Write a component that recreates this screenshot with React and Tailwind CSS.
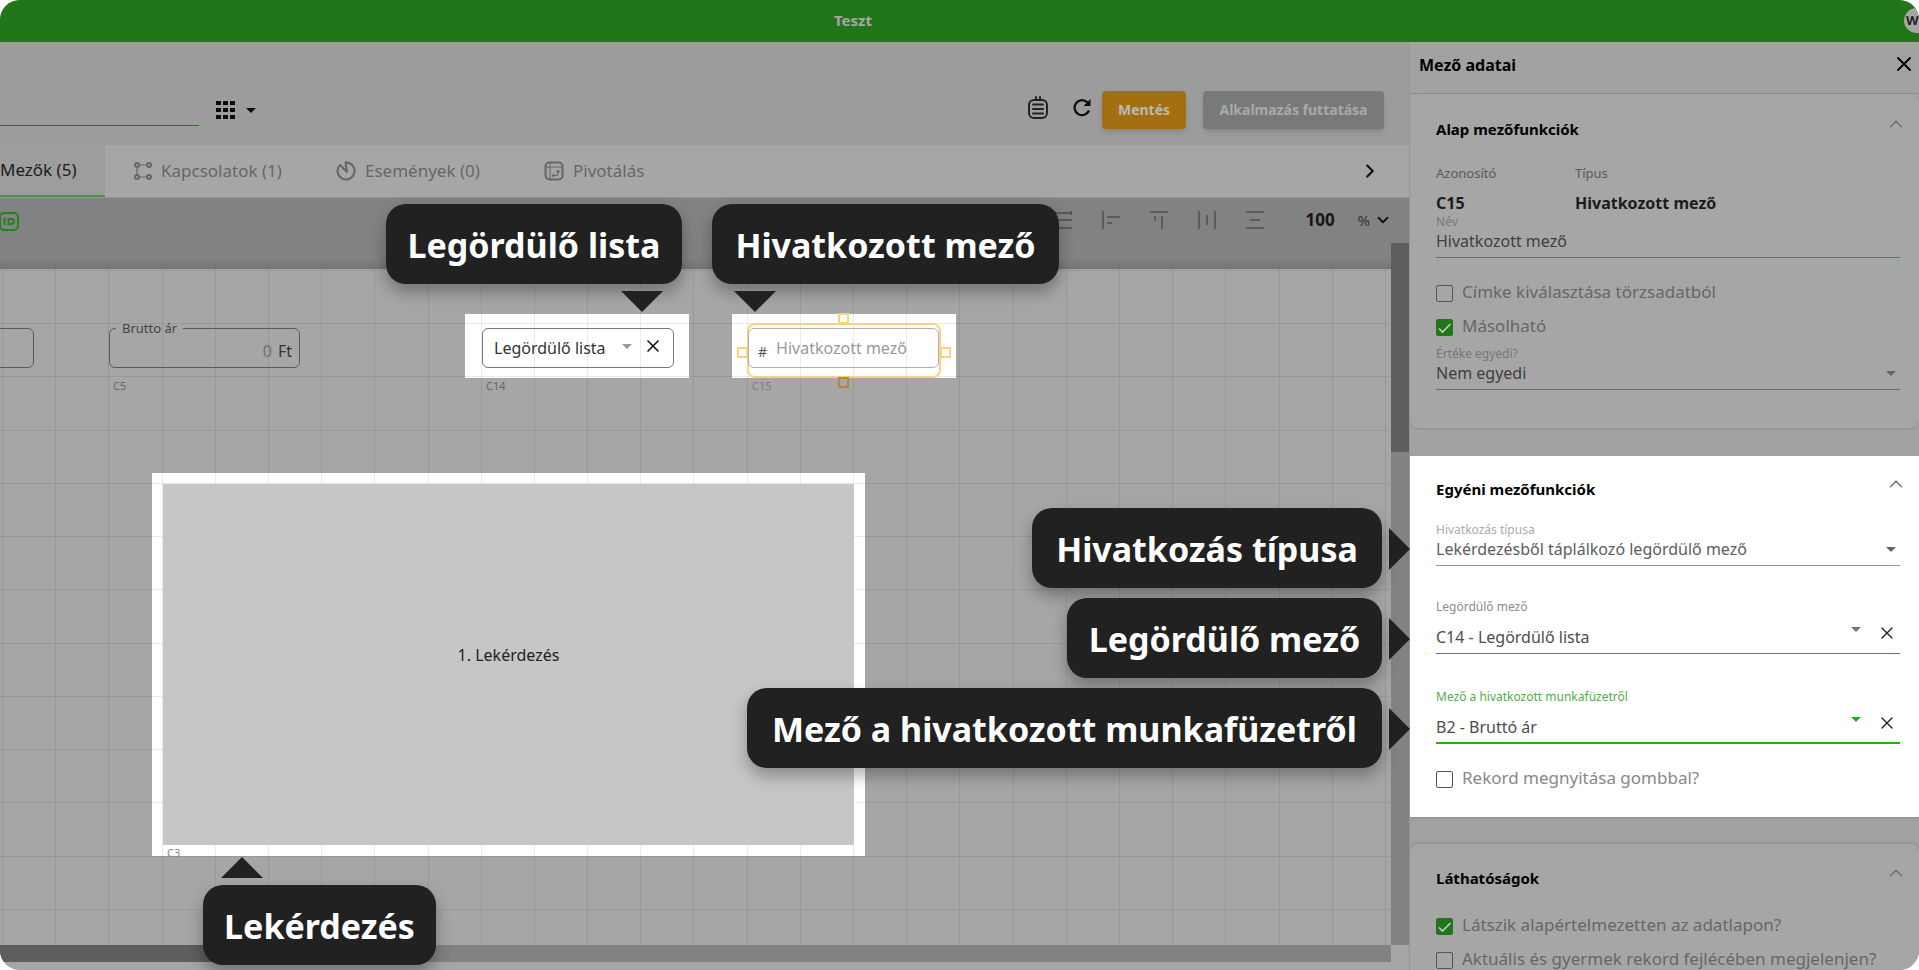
import { useId } from 'react';
import { ChevronDown, ChevronRight, ChevronUp, X } from 'lucide-react';
import { clsx } from 'clsx';

const tabs = [
    { label: 'Kapcsolatok (1)', icon: RelationIcon, width: 'w-[202px]' },
    { label: 'Események (0)', icon: EventIcon, width: 'w-[208px]' },
    { label: 'Pivotálás', icon: PivotIcon, width: 'w-[202px]' },
];

const alignIcons = [
    { label: 'Azonos szélesség', path: 'M0 2H18M0 9H18M0 17H18M1 0V4M17 0V4' },
    { label: 'Balra igazítás', path: 'M1 0V18M5 6H18M5 12H10' },
    { label: 'Felülre igazítás', path: 'M0 1H18M5 5V10M12 5V18' },
    { label: 'Vízszintes elosztás', path: 'M1 0V18M9 4V14M17 0V18' },
    { label: 'Függőleges elosztás', path: 'M0 1H18M4 9H14M0 17H18' },
];

function RelationIcon() {
    return (
        <svg viewBox="0 0 18 20" className="h-5 w-[18px]" fill="none" stroke="currentColor" strokeWidth="2">
            <circle cx="3" cy="4" r="2" />
            <circle cx="15" cy="4" r="2" />
            <circle cx="3" cy="16" r="2" />
            <circle cx="15" cy="16" r="2" />
            <path d="M5 4H13M3 6V14M5 16H13" strokeWidth="1.2" />
        </svg>
    );
}

function EventIcon() {
    return (
        <svg viewBox="0 0 20 20" className="size-5" fill="none" stroke="currentColor" strokeWidth="2" strokeLinejoin="round">
            <path d="M9.5 1.5A8.5 8.5 0 1 1 4 4L11 11Z" />
        </svg>
    );
}

function PivotIcon() {
    return (
        <svg viewBox="0 0 20 20" className="size-5" fill="none" stroke="currentColor">
            <rect x="1.5" y="1.5" width="17" height="17" rx="4" strokeWidth="2" />
            <path d="M2 6H18M6 2V18" strokeWidth="1" />
            <path d="M9 14.5H12.5Q14 14.5 14 13V9.5M10 13L8.5 14.5L10 16M12.5 11L14 9.5L15.5 11" strokeWidth="1.2" />
        </svg>
    );
}

function Caret({ className }) {
    return (
        <svg viewBox="0 0 10 5" className={clsx('pointer-events-none h-[5px] w-[10px] shrink-0', className)} fill="currentColor">
            <path d="M0 0H10L5 5Z" />
        </svg>
    );
}

function Checkbox({ label, checked, className }) {
    return (
        <label className={clsx('flex h-[17px] items-start gap-[9px] text-[17px] leading-[13px] whitespace-nowrap', className)}>
            <span className="relative size-[17px] shrink-0">
                <input
                    type="checkbox"
                    defaultChecked={checked}
                    className="peer block size-[17px] appearance-none rounded-[2px] border border-[#555] checked:border-[#21761a] checked:bg-[#21761a]"
                />
                <svg
                    viewBox="0 0 17 17"
                    className="pointer-events-none absolute inset-0 hidden size-[17px] text-[#c8c8c8] peer-checked:block"
                    fill="none"
                    stroke="currentColor"
                    strokeWidth="1.6"
                >
                    <path d="M3 9.5L6.5 13L14.5 5" />
                </svg>
            </span>
            {label}
        </label>
    );
}

function SelectField({ label, value, clearable, active, labelClass, lineClass, textClass, className }) {
    const id = useId();

    return (
        <div className={className}>
            <label htmlFor={id} className={clsx('block text-xs leading-[14px]', labelClass)}>
                {label}
            </label>
            <div
                className={clsx(
                    'flex items-start',
                    clearable && 'mt-[11px]',
                    active ? 'border-b-2 pb-[3px]' : 'border-b pb-1',
                    lineClass,
                )}
            >
                <select
                    id={id}
                    className={clsx('h-6 min-w-0 flex-1 appearance-none bg-transparent text-base leading-6 outline-none', textClass)}
                >
                    <option>{value}</option>
                </select>
                {clearable ? (
                    <>
                        <Caret className={clsx('mt-[2px]', active ? 'text-[#20b014]' : 'text-[#757575]')} />
                        <button type="button" aria-label="Törlés" className="-mt-[2px] mr-[3px] ml-4 text-[#222]">
                            <X size={20} strokeWidth={1.6} />
                        </button>
                    </>
                ) : (
                    <Caret className="mt-[10px] mr-1 text-[#666]" />
                )}
            </div>
        </div>
    );
}

function Section({ title, className, children }) {
    return (
        <section className={clsx('pr-[19px] pl-[26px]', className)}>
            <div className="flex items-start justify-between">
                <h2 className="text-[15px] leading-6 font-bold text-black">{title}</h2>
                <button type="button" aria-label={title} className="-mt-1 -mr-[7px] text-[#707070]">
                    <ChevronUp size={22} strokeWidth={1.5} />
                </button>
            </div>
            {children}
        </section>
    );
}

function Callout({ children, className, arrow }) {
    return (
        <div
            className={clsx(
                'absolute z-10 flex h-20 items-center justify-center rounded-[20px] bg-[#212121] pt-[2px] text-[34px] leading-10 font-bold whitespace-nowrap text-white shadow-[0_8px_16px_rgba(0,0,0,0.3)]',
                className,
            )}
        >
            {children}
            <span className={clsx('absolute bg-[#212121]', arrow)} />
        </div>
    );
}

const arrowDown = 'top-[87px] h-[21px] w-[42px] [clip-path:polygon(0_0,100%_0,50%_100%)]';
const arrowUp = '-top-7 left-[18px] h-[21px] w-[42px] [clip-path:polygon(0_100%,100%_100%,50%_0)]';
const arrowRight = '-right-7 top-5 h-[42px] w-[21px] [clip-path:polygon(0_0,100%_50%,0_100%)]';

function GridLines() {
    return (
        <div className="pointer-events-none absolute top-[1px] left-[2px] h-[692px] w-[1384px]">
            <div className="absolute inset-0 flex">
                {Array.from({ length: 26 }, (_, i) => (
                    <div key={i} className="-mt-1 flex-1 border-l border-black/8" />
                ))}
                <div className="border-l border-black/8" />
            </div>
            <div className="absolute inset-y-0 -right-1 -left-1 flex flex-col">
                {Array.from({ length: 13 }, (_, i) => (
                    <div key={i} className="flex-1 border-t border-black/8" />
                ))}
            </div>
        </div>
    );
}

function Canvas() {
    return (
        <div className="relative flex-1 overflow-hidden bg-[#a6a6a6] text-[#333]">
            <div className="absolute top-[45px] left-[465px] h-16 w-[224px] bg-white" />
            <div className="absolute top-[45px] left-[732px] h-16 w-[224px] bg-white" />
            <div className="absolute top-[204px] left-[152px] h-[383px] w-[713px] bg-white" />
            <GridLines />

            <div className="absolute top-[59px] -left-4 h-10 w-[50px] rounded-md border border-[#5a5a5a]" />

            <div className="absolute top-[59px] left-[109px] h-10 w-[191px]">
                <fieldset className="absolute inset-x-0 -top-2 bottom-0 rounded-md border border-[#5a5a5a] px-[6px]">
                    <legend className="px-[6px] text-[13px] leading-4 text-[#444]">Brutto ár</legend>
                </fieldset>
                <label className="absolute inset-0 flex items-center gap-[6px] pt-[5px] pr-2 pl-3 text-base leading-6 text-[#333]">
                    <input aria-label="Brutto ár" defaultValue="0" className="min-w-0 flex-1 bg-transparent text-right text-[#707070] outline-none" />
                    Ft
                </label>
            </div>
            <span className="absolute top-[109px] left-[113px] text-[11px] leading-4 text-[#666]">C5</span>

            <div className="absolute top-[59px] left-[482px] flex h-10 w-[192px] items-center rounded-md border border-[#777] pr-[10px] pl-[11px]">
                <select aria-label="Legördülő lista" className="min-w-0 flex-1 appearance-none bg-transparent text-base leading-6 text-[#333] outline-none">
                    <option>Legördülő lista</option>
                </select>
                <Caret className="-mt-1 text-[#999]" />
                <button type="button" aria-label="Törlés" className="-mt-1 ml-[11px] text-[#1a1a1a]">
                    <X size={20} strokeWidth={2} />
                </button>
            </div>
            <span className="absolute top-[109px] left-[486px] text-[11px] leading-4 text-[#666]">C14</span>

            <div className="absolute top-[54px] left-[747px] h-[55px] w-[194px] rounded-lg border-2 border-[#fdd081]">
                <span className="absolute -top-3 left-[89px] size-[11px] border-2 border-[#fdd081]" />
                <span className="absolute top-[22px] -left-3 size-[11px] border-2 border-[#fdd081]" />
                <span className="absolute top-[22px] -right-3 size-[11px] border-2 border-[#fdd081]" />
                <span className="absolute -bottom-3 left-[89px] size-[11px] border-2 border-[#b58842]" />
            </div>
            <label className="absolute top-[59px] left-[748px] flex h-10 w-[191px] items-center gap-[9px] rounded-md border border-[#b0b0b0] pl-[9px] text-base leading-6">
                <span className="pt-2 text-sm leading-4 text-[#555]">#</span>
                <input placeholder="Hivatkozott mező" className="min-w-0 flex-1 bg-transparent outline-none placeholder:text-[#999]" />
            </label>
            <span className="absolute top-[109px] left-[752px] text-[11px] leading-4 text-[#7c7c7c]">C15</span>

            <div className="absolute top-[215px] left-[163px] flex h-[361px] w-[691px] items-center justify-center bg-[#c6c6c6] pb-5 text-base text-[#222]">
                1. Lekérdezés
            </div>
            <span className="absolute top-[576px] left-[167px] text-[11px] leading-4 text-[#888]">C3</span>
        </div>
    );
}

function FieldPanel() {
    return (
        <aside className="w-[510px] shrink-0 overflow-hidden border-l border-[#959595] bg-[#a2a2a2]">
            <div className="flex h-[52px] items-start justify-between border-b border-[#8c8c8c] pt-[11px] pr-[3px] pl-[9px]">
                <h1 className="text-base leading-6 font-bold text-black">Mező adatai</h1>
                <button type="button" aria-label="Bezárás" className="-mt-[1px] text-black">
                    <X size={24} strokeWidth={1.8} />
                </button>
            </div>

            <Section title="Alap mezőfunkciók" className="rounded-lg bg-[#a6a6a6] pt-[23px] pb-[38px] shadow-sm">
                <dl className="mt-6 grid grid-cols-[139px_1fr] text-[#1c1c1c]">
                    <dt className="text-[13px] leading-4 text-[#5a5a5a]">Azonosító</dt>
                    <dt className="text-[13px] leading-4 text-[#5a5a5a]">Típus</dt>
                    <dd className="mt-[10px] text-base leading-6 font-bold">C15</dd>
                    <dd className="mt-[10px] text-base leading-6 font-bold">Hivatkozott mező</dd>
                </dl>
                <label className="block text-xs leading-[14px] text-[#777]">
                    Név
                    <input
                        defaultValue="Hivatkozott mező"
                        className="block h-[29px] w-full border-b border-[#3d8f36] bg-transparent pb-1 text-base leading-6 text-[#3f3f3f] outline-none"
                    />
                </label>
                <Checkbox label="Címke kiválasztása törzsadatból" className="mt-[27px] text-[#666]" />
                <Checkbox label="Másolható" checked className="mt-[17px] text-[#666]" />
                <SelectField
                    label="Értéke egyedi?"
                    value="Nem egyedi"
                    className="mt-[11px]"
                    labelClass="text-[#777]"
                    lineClass="border-[#3d8f36]"
                    textClass="text-[#3f3f3f]"
                />
            </Section>

            <Section title="Egyéni mezőfunkciók" className="mt-7 bg-white pt-[21px] pb-[29px] shadow-sm">
                <SelectField
                    label="Hivatkozás típusa"
                    value="Lekérdezésből táplálkozó legördülő mező"
                    className="mt-[22px]"
                    labelClass="text-[#aaa]"
                    lineClass="border-[#5cc554]"
                    textClass="text-[#5c5c5c]"
                />
                <SelectField
                    label="Legördülő mező"
                    value="C14 - Legördülő lista"
                    clearable
                    className="mt-[34px]"
                    labelClass="text-[#8c8c8c]"
                    lineClass="border-[#20b014]"
                    textClass="text-[#4c4c4c]"
                />
                <SelectField
                    label="Mező a hivatkozott munkafüzetről"
                    value="B2 - Bruttó ár"
                    clearable
                    active
                    className="mt-9"
                    labelClass="text-[#4fae48]"
                    lineClass="border-[#20b014]"
                    textClass="text-[#4c4c4c]"
                />
                <Checkbox label="Rekord megnyitása gombbal?" className="mt-[27px] text-[#888]" />
            </Section>

            <Section title="Láthatóságok" className="mt-[27px] rounded-t-lg bg-[#a6a6a6] pt-[22px] pb-10 shadow-[0_0_4px_rgba(0,0,0,0.2)]">
                <Checkbox label="Látszik alapértelmezetten az adatlapon?" checked className="mt-7 text-[#666]" />
                <Checkbox label="Aktuális és gyermek rekord fejlécében megjelenjen?" className="mt-[17px] text-[#666]" />
            </Section>
        </aside>
    );
}

export default function App() {
    return (
        <div className="flex h-screen flex-col overflow-hidden rounded-[20px] bg-[#a6a6a6] font-['Noto_Sans',sans-serif]">
            <header className="relative flex h-[42px] shrink-0 items-center justify-center bg-[#21761a] pr-[213px] pb-[2px]">
                <span className="text-[15px] leading-5 font-bold text-[#a6a6a6]">Teszt</span>
                <span className="absolute top-2 -right-[10px] flex size-[25px] items-center rounded-full bg-[#a6a6a6] pl-[2px] text-[13px] font-bold text-[#222]">
                    W
                </span>
            </header>

            <div className="flex min-h-0 flex-1">
                <main className="relative flex min-w-0 flex-1 flex-col">
                    <div className="flex h-[103px] shrink-0 items-start bg-[#9c9c9c] pt-[49px] pr-[25px]">
                        <input aria-label="Munkafüzet neve" className="h-[35px] w-[199px] border-b border-[#21761a] bg-transparent outline-none" />
                        <button type="button" aria-label="Nézet" className="mt-[10px] ml-[17px] flex items-center gap-[11px] text-[#0c0c0c]">
                            <svg viewBox="0 0 19 18" className="h-[18px] w-[19px]" fill="currentColor">
                                <path d="M0 0h5v4H0zM7 0h5v4H7zM14 0h5v4h-5zM0 7h5v4H0zM7 7h5v4H7zM14 7h5v4h-5zM0 14h5v4H0zM7 14h5v4H7zM14 14h5v4h-5z" />
                            </svg>
                            <Caret />
                        </button>
                        <div className="ml-auto flex items-start">
                            <button type="button" aria-label="Napló" className="mt-[5px] text-[#222]">
                                <svg viewBox="0 0 20 24" className="h-6 w-5" fill="none" stroke="currentColor" strokeWidth="2" strokeLinecap="round">
                                    <rect x="1" y="4" width="18" height="18" rx="5" />
                                    <path d="M5 8.5H15M5 13H15M5 17.5H15M8 1V4M12 1V4" strokeWidth="2" />
                                </svg>
                            </button>
                            <button type="button" aria-label="Frissítés" className="mt-[7px] mr-[10px] ml-6 text-[#0c0c0c]">
                                <svg viewBox="0 0 20 20" className="size-5" fill="none" stroke="currentColor" strokeWidth="2.2">
                                    <path d="M17 12.5A7.5 7.5 0 1 1 15.5 4.5" />
                                    <path d="M18.5 1V8H11.5Z" fill="currentColor" stroke="none" />
                                </svg>
                            </button>
                            <button type="button" className="h-[38px] w-[84px] rounded bg-[#a46f10] text-sm font-bold text-[#b9b9b9] shadow-md">
                                Mentés
                            </button>
                            <button
                                type="button"
                                className="ml-[17px] h-[38px] w-[181px] rounded bg-[#777a78] text-sm font-bold whitespace-nowrap text-[#a9a9a9] shadow-md"
                            >
                                Alkalmazás futtatása
                            </button>
                        </div>
                    </div>

                    <nav className="flex h-[52px] shrink-0 items-stretch bg-[#a6a6a6] pr-7 text-[17px] leading-6 text-[#666]">
                        <button type="button" className="w-[105px] border-b-2 border-[#4f9049] bg-[#9d9d9d] text-left whitespace-nowrap text-[#1c1c1c]">
                            Mezők (5)
                        </button>
                        {tabs.map(({ label, icon: Icon, width }) => (
                            <button key={label} type="button" className={clsx('flex items-center gap-[9px] pl-[29px] whitespace-nowrap', width)}>
                                <Icon />
                                {label}
                            </button>
                        ))}
                        <button type="button" aria-label="Következő fülek" className="ml-auto text-[#111]">
                            <ChevronRight size={22} strokeWidth={2.4} />
                        </button>
                    </nav>

                    <div className="flex h-[46px] shrink-0 items-start border-t border-[#949494] bg-[#828282] pt-3 pr-[17px]">
                        <button type="button" aria-label="Azonosítók" className="mt-[2px] text-[#21831a]">
                            <svg viewBox="0 0 20 20" className="size-5" fill="none" stroke="currentColor" strokeWidth="2">
                                <rect x="0" y="1" width="18" height="17" rx="4" />
                                <path d="M4.5 6V13M8.5 7H11Q14 7 14 9.5Q14 12 11 12H8.5Z" />
                            </svg>
                        </button>
                        <div className="ml-auto flex items-start gap-[30px]">
                            {alignIcons.map((icon) => (
                                <button key={icon.label} type="button" aria-label={icon.label} className="mt-[1px] text-[#4f4f4f]">
                                    <svg viewBox="0 0 18 18" className="size-[18px]" fill="none" stroke="currentColor" strokeWidth="1.5">
                                        <path d={icon.path} />
                                    </svg>
                                </button>
                            ))}
                        </div>
                        <input aria-label="Nagyítás" defaultValue="100" className="ml-[42px] h-5 w-[52px] bg-transparent text-[17px] leading-5 font-bold text-[#161616] outline-none" />
                        <button type="button" className="flex h-5 items-center gap-1 text-[15px] text-[#333]">
                            %
                            <ChevronDown size={18} strokeWidth={2.4} className="text-[#111]" />
                        </button>
                    </div>

                    <div className="flex min-h-0 flex-1 pb-2">
                        <div className="flex min-w-0 flex-1 flex-col">
                            <div className="h-[26px] shrink-0 bg-linear-to-b from-[#828282] from-60% to-[#747474]" />
                            <Canvas />
                            <div className="h-[17px] shrink-0 bg-[#828282]">
                                <div className="h-full w-[320px] bg-[#5e5e5e]" />
                            </div>
                        </div>
                        <div className="mb-[17px] w-[18px] shrink-0 bg-[#828282]">
                            <div className="h-[209px] bg-[#5e5e5e]" />
                        </div>
                    </div>

                    <Callout className="top-[162px] left-[386px] w-[296px]" arrow={clsx(arrowDown, 'left-[235px]')}>
                        Legördülő lista
                    </Callout>
                    <Callout className="top-[162px] left-[712px] w-[347px]" arrow={clsx(arrowDown, 'left-[22px]')}>
                        Hivatkozott mező
                    </Callout>
                    <Callout className="top-[466px] right-[27px] w-[350px]" arrow={arrowRight}>
                        Hivatkozás típusa
                    </Callout>
                    <Callout className="top-[556px] right-[27px] w-[315px]" arrow={arrowRight}>
                        Legördülő mező
                    </Callout>
                    <Callout className="top-[646px] right-[27px] w-[635px]" arrow={arrowRight}>
                        Mező a hivatkozott munkafüzetről
                    </Callout>
                    <Callout className="top-[843px] left-[203px] w-[233px]" arrow={arrowUp}>
                        Lekérdezés
                    </Callout>
                </main>

                <FieldPanel />
            </div>
        </div>
    );
}
